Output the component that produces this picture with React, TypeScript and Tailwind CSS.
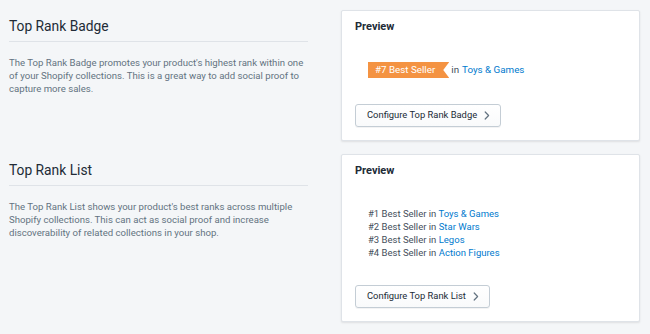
import React from "react";

const links = [
  { rank: 1, name: "Toys & Games" },
  { rank: 2, name: "Star Wars" },
  { rank: 3, name: "Legos" },
  { rank: 4, name: "Action Figures" },
];

const Chevron = () => (
  <svg width="6" height="9" viewBox="0 0 6 9" fill="none" className="ml-[7px]">
    <path d="M1.2 1 L4.6 4.5 L1.2 8" stroke="#637381" strokeWidth="1.2" strokeLinecap="round" strokeLinejoin="round" />
  </svg>
);

const ConfigureButton = ({ label }: { label: string }) => (
  <button className="flex items-center h-[23px] pl-[11px] pr-[10px] rounded-[3px] border border-[#c4cdd5] bg-gradient-to-b from-white to-[#f9fafb] shadow-[0_1px_0_rgba(22,29,37,0.05)] text-[9.4px] text-[#212b36]">
    {label}
    <Chevron />
  </button>
);

const Section = ({
  title,
  text,
  children,
  button,
}: {
  title: string;
  text: React.ReactNode;
  children: React.ReactNode;
  button: string;
}) => (
  <div className="grid grid-cols-[299px_299px] gap-x-[33px] items-start">
    <div className="pt-[6px]">
      <h2 className="text-[13.8px] leading-[20px] text-[#212b36] pb-[5px] border-b border-[#dfe3e8]">{title}</h2>
      <p className="mt-[14px] text-[9.6px] leading-[13px] text-[#637381]">{text}</p>
    </div>
    <div className="bg-white border border-[#dfe3e8] rounded-[2px] shadow-[0_1px_2px_rgba(63,63,68,0.12)] px-[13px] pt-[9px] pb-[13px]">
      <div className="text-[11px] leading-[14px] font-bold text-[#212b36]">Preview</div>
      {children}
      <div className="mt-[26px] flex">
        <ConfigureButton label={button} />
      </div>
    </div>
  </div>
);

export default function App() {
  return (
    <div
      className="w-[650px] h-[334px] bg-[#f4f6f8] pl-[9px] pt-[10px] flex flex-col gap-[13px] overflow-hidden"
      style={{ fontFamily: "Roboto, 'Noto Sans', sans-serif" }}
    >
      <Section
        title="Top Rank Badge"
        text="The Top Rank Badge promotes your product's highest rank within one of your Shopify collections. This is a great way to add social proof to capture more sales."
        button="Configure Top Rank Badge"
      >
        <div className="mt-[28px] pl-[13px] flex items-center text-[9.8px] leading-[16px]">
          <span className="h-[16px] pl-[7px] pr-[14px] bg-[#f49342] text-white [clip-path:polygon(0_0,100%_0,calc(100%_-_6px)_50%,100%_100%,0_100%)]">
            #7 Best Seller
          </span>
          <span className="ml-[2px] text-[#454f5b]">in</span>
          <span className="ml-[3px] text-[#007ace]">Toys &amp; Games</span>
        </div>
      </Section>
      <Section
        title="Top Rank List"
        text="The Top Rank List shows your product's best ranks across multiple Shopify collections. This can act as social proof and increase discoverability of related collections in your shop."
        button="Configure Top Rank List"
      >
        <ul className="mt-[29px] pl-[13px] text-[9.5px] leading-[13px] text-[#454f5b]">
          {links.map((l) => (
            <li key={l.rank}>
              #{l.rank} Best Seller in <span className="text-[#007ace]">{l.name}</span>
            </li>
          ))}
        </ul>
      </Section>
    </div>
  );
}
